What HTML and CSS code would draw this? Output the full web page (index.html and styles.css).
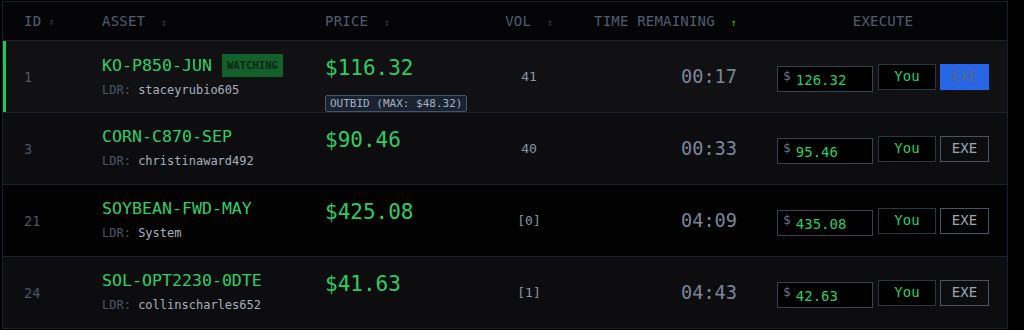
FILE: index.html
```html
<!DOCTYPE html>
<html lang="en">

<head>
    <meta charset="UTF-8">
    <meta name="viewport" content="width=device-width, initial-scale=1.0">
    <title>Auction Board</title>
    <link rel="stylesheet" href="styles.css">
</head>

<body>

    <div class="board">
        <div class="board-row board-head">
            <div class="cell cell-id">ID <span class="sort">&#8597;</span></div>
            <div class="cell">ASSET <span class="sort">&#8597;</span></div>
            <div class="cell">PRICE <span class="sort">&#8597;</span></div>
            <div class="cell cell-vol">VOL <span class="sort">&#8597;</span></div>
            <div class="cell cell-time">TIME REMAINING <span class="sort sort-active">&#8593;</span></div>
            <div class="cell cell-exec">EXECUTE</div>
        </div>

        <div class="board-row row-watch">
            <div class="cell cell-id">1</div>
            <div class="cell cell-asset">
                <div class="asset-name">KO-P850-JUN <span class="tag-watch">WATCHING</span></div>
                <div class="leader"><span class="leader-label">LDR:</span> staceyrubio605</div>
            </div>
            <div class="cell cell-price">
                <div class="price">$116.32</div>
                <div class="tag-outbid">OUTBID (MAX: $48.32)</div>
            </div>
            <div class="cell cell-vol">41</div>
            <div class="cell cell-time">00:17</div>
            <div class="cell cell-exec">
                <div class="exec">
                    <label class="bid-box"><span class="cur">$</span><input type="text" value="126.32"></label>
                    <button class="btn-you">You</button>
                    <button class="btn-exe btn-exe-active">EXE</button>
                </div>
            </div>
        </div>

        <div class="board-row row-alt">
            <div class="cell cell-id">3</div>
            <div class="cell cell-asset">
                <div class="asset-name">CORN-C870-SEP</div>
                <div class="leader"><span class="leader-label">LDR:</span> christinaward492</div>
            </div>
            <div class="cell cell-price">
                <div class="price">$90.46</div>
            </div>
            <div class="cell cell-vol">40</div>
            <div class="cell cell-time">00:33</div>
            <div class="cell cell-exec">
                <div class="exec">
                    <label class="bid-box"><span class="cur">$</span><input type="text" value="95.46"></label>
                    <button class="btn-you">You</button>
                    <button class="btn-exe">EXE</button>
                </div>
            </div>
        </div>

        <div class="board-row row-dark">
            <div class="cell cell-id">21</div>
            <div class="cell cell-asset">
                <div class="asset-name">SOYBEAN-FWD-MAY</div>
                <div class="leader"><span class="leader-label">LDR:</span> System</div>
            </div>
            <div class="cell cell-price">
                <div class="price">$425.08</div>
            </div>
            <div class="cell cell-vol">[0]</div>
            <div class="cell cell-time">04:09</div>
            <div class="cell cell-exec">
                <div class="exec">
                    <label class="bid-box"><span class="cur">$</span><input type="text" value="435.08"></label>
                    <button class="btn-you">You</button>
                    <button class="btn-exe">EXE</button>
                </div>
            </div>
        </div>

        <div class="board-row row-alt">
            <div class="cell cell-id">24</div>
            <div class="cell cell-asset">
                <div class="asset-name">SOL-OPT2230-0DTE</div>
                <div class="leader"><span class="leader-label">LDR:</span> collinscharles652</div>
            </div>
            <div class="cell cell-price">
                <div class="price">$41.63</div>
            </div>
            <div class="cell cell-vol">[1]</div>
            <div class="cell cell-time">04:43</div>
            <div class="cell cell-exec">
                <div class="exec">
                    <label class="bid-box"><span class="cur">$</span><input type="text" value="42.63"></label>
                    <button class="btn-you">You</button>
                    <button class="btn-exe">EXE</button>
                </div>
            </div>
        </div>
    </div>

</body>

</html>
```

FILE: styles.css
```css
body {
    font-family: "DejaVu Sans Mono", "Liberation Mono", monospace;
    background-color: #000;
    margin: 0;
    padding: 1px 0 0 2px;
    overflow: hidden;
}

.board {
    width: 1004px;
    border: 1px solid #1a212c;
    border-bottom: none;
    background-color: #060608;
}

.board-row {
    display: grid;
    grid-template-columns: 83px 223px 161px 118px 165px 254px;
    height: 72px;
    box-sizing: border-box;
    border-bottom: 1px solid #1a222d;
    align-items: center;
}

.board-head {
    height: 39px;
    background-color: #050507;
}

.board-head .cell {
    font-size: 14px;
    color: #525d6e;
    letter-spacing: 0.2px;
}

.sort {
    font-size: 10px;
    color: #323b48;
    margin-left: 7px;
}

.sort-active {
    color: #22c55e;
}

.row-watch {
    background-color: #111114;
}

.row-watch .cell-id {
    box-shadow: inset 3px 0 0 #22c55e;
}

.row-alt {
    background-color: #0d0d10;
}

.row-dark {
    background-color: #020203;
}

.cell {
    padding: 0 16px;
    white-space: nowrap;
}

.cell-id {
    padding-left: 21px;
    font-size: 13.5px;
    color: #4b5563;
    align-self: stretch;
    display: flex;
    align-items: center;
}

.cell-asset {
    align-self: start;
    padding-top: 13px;
}

.asset-name {
    font-size: 16.6px;
    line-height: 22px;
    color: #34cc6a;
    display: flex;
    align-items: center;
}

.tag-watch {
    display: inline-block;
    margin-left: 10px;
    height: 23px;
    line-height: 23px;
    padding: 0 5px;
    background-color: #13602d;
    color: #0c2615;
    font-size: 10.6px;
    font-weight: bold;
}

.leader {
    margin-top: 5px;
    font-size: 12px;
    line-height: 16px;
    color: #a7afbb;
}

.leader-label {
    color: #4b5563;
}

.cell-price {
    align-self: start;
    padding-top: 14px;
}

.price {
    font-size: 21px;
    line-height: 26px;
    color: #2fcb66;
}

.tag-outbid {
    display: inline-block;
    margin-top: 14px;
    padding: 0 4px;
    font-size: 11px;
    line-height: 15px;
    color: #a3b1c3;
    background-color: #1a2230;
    border: 1px solid #46546a;
    border-radius: 2px;
}

.cell-vol {
    text-align: center;
    font-size: 13px;
    color: #8a94a3;
}

.board-head .cell-vol {
    padding-left: 16px;
}

.cell-time {
    text-align: right;
    font-size: 18.6px;
    color: #7b8697;
}

.board-head .cell-time {
    padding: 0 18px 0 6px;
}

.cell-exec {
    text-align: center;
    padding: 0 12px 0 18px;
}

.exec {
    display: flex;
    justify-content: center;
    align-items: center;
    gap: 4px;
}

.bid-box {
    display: flex;
    align-items: flex-start;
    width: 96px;
    height: 26px;
    box-sizing: border-box;
    margin-top: 4px;
    margin-right: 1px;
    padding: 1px 0 0 5px;
    background-color: #000;
    border: 1px solid #394250;
}

.cur {
    font-size: 13px;
    color: #6b7280;
    margin-right: 5px;
}

.bid-box input {
    width: 70px;
    padding: 0;
    margin-top: 4px;
    border: none;
    outline: none;
    background: transparent;
    font-family: inherit;
    font-size: 14px;
    color: #2fcb66;
}

.btn-you,
.btn-exe {
    height: 26px;
    box-sizing: border-box;
    padding: 0 0 2px;
    font-family: inherit;
    font-size: 14px;
    cursor: pointer;
}

.btn-you {
    width: 58px;
    background-color: #000;
    border: 1px solid #30363f;
    color: #2fcb66;
}

.btn-exe {
    width: 49px;
    background-color: transparent;
    border: 1px solid #4b5360;
    color: #9ba4b0;
}

.btn-exe-active {
    background-color: #2766e6;
    border-color: #2766e6;
    color: #56698a;
}
```
